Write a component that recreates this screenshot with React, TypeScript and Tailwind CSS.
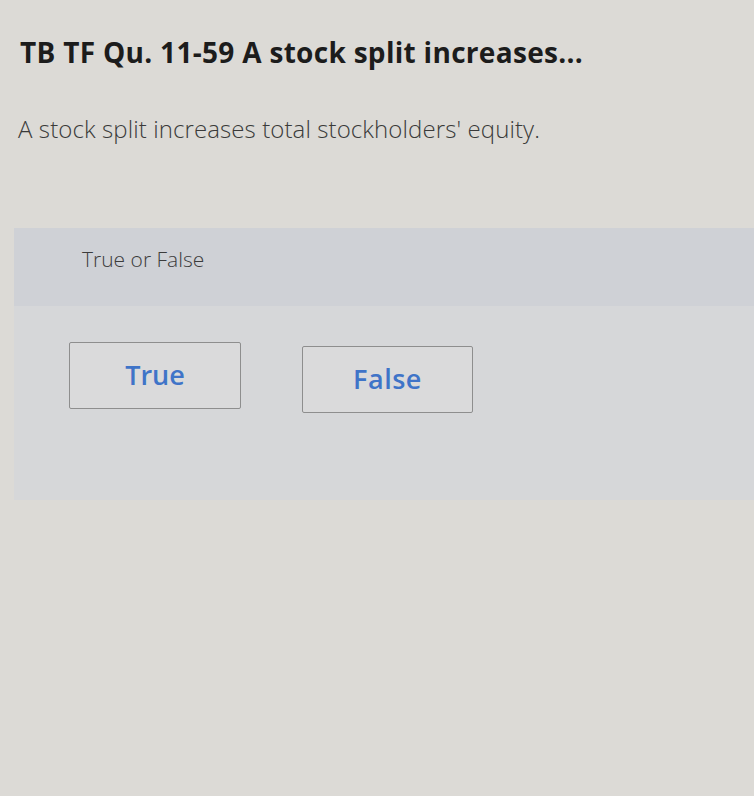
export default function App() {
  return (
    <div className="min-h-[796px] w-full bg-[#dcdad6] font-['Open_Sans','Liberation_Sans',sans-serif] overflow-hidden">
      {/* Question header */}
      <div className="pl-[20px] pt-[34px]">
        <h1 className="text-[28px] font-bold leading-[36px] text-[#1c1c1c] tracking-[0.3px]">
          TB TF Qu. 11-59 A stock split increases...
        </h1>
      </div>
      <p className="pl-[18px] pt-[43px] text-[24px] leading-[32px] text-[#3a3a3a] font-light tracking-[0.1px]">
        A stock split increases total stockholders' equity.
      </p>

      {/* Answer panel */}
      <div className="ml-[14px] mt-[83px] h-[272px] bg-[#d6d7d9]">
        <div className="h-[78px] bg-[#cfd1d6] pl-[68px] pt-[16px]">
          <span className="text-[21px] font-light text-[#3c3c3c]">True or False</span>
        </div>
        <div className="flex gap-[61px] pl-[55px] pt-[36px]">
          <button className="w-[172px] h-[67px] border border-[#8e8e8e] rounded-[2px] bg-[#dadadb] text-[27px] font-semibold text-[#3f74c8]">
            True
          </button>
          <button className="w-[171px] h-[67px] mt-[4px] border border-[#8e8e8e] rounded-[2px] bg-[#dadadb] text-[27px] font-semibold text-[#3f74c8] tracking-[0.5px]">
            False
          </button>
        </div>
      </div>
    </div>
  );
}
